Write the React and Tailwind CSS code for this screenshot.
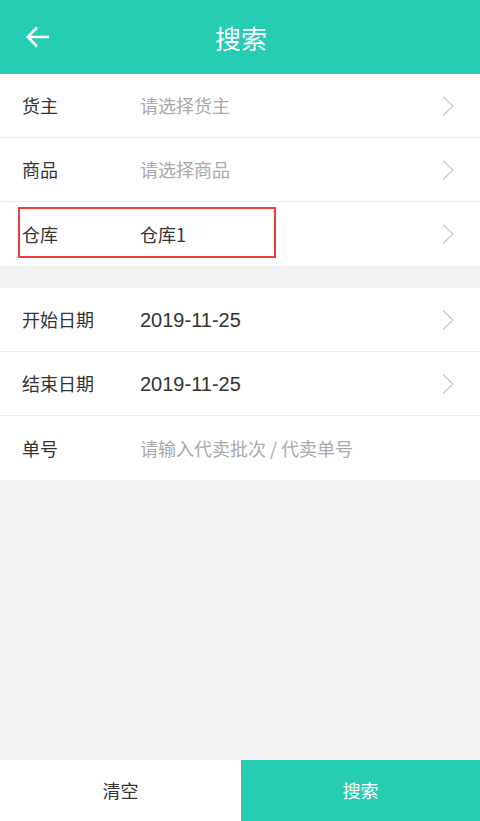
import React from 'react';

const font = { fontFamily: '"Noto Sans CJK SC", "Noto Sans", sans-serif' };

function Chevron() {
    return (
        <svg width="14" height="22" viewBox="0 0 14 22" fill="none" className="shrink-0">
            <path d="M2 1.5 L12 11 L2 20.5" stroke="#c9c9c9" strokeWidth="1.3" />
        </svg>
    );
}

function Row({ label, value, placeholder, arrow = true, last = false, latin = false }) {
    return (
        <div className={`h-16 flex items-center pl-[22px] pr-[25px] ${last ? '' : 'border-b border-[#ececec]'}`}>
            <div className="w-[118px] text-[18px] text-[#333333]">{label}</div>
            <div
                className={`flex-1 ${latin ? 'text-[20px] font-["Liberation_Sans",sans-serif]' : 'text-[18px]'} ${value ? 'text-[#333333]' : 'text-[#a9a9a9]'}`}
            >
                {value || placeholder}
            </div>
            {arrow && <Chevron />}
        </div>
    );
}

export default function App() {
    return (
        <div className="w-[480px] h-[821px] bg-[#f3f3f3] flex flex-col" style={font}>
            <div className="h-[74px] bg-[#26cdb3] flex items-center relative shrink-0">
                <svg className="absolute left-[26px] top-[26px]" width="24" height="22" viewBox="0 0 24 22" fill="none">
                    <path d="M11 1.5 L1.8 11 L11 20.5 M2 11 H23" stroke="white" strokeWidth="2.6" />
                </svg>
                <div className="flex-1 text-center text-white text-[26px] pl-[2px]">搜索</div>
            </div>

            <div className="bg-white">
                <Row label="货主" placeholder="请选择货主" />
                <Row label="商品" placeholder="请选择商品" />
                <div className="relative">
                    <Row label="仓库" value="仓库1" last />
                    <div className="absolute left-[18px] top-[5px] w-[258px] h-[51px] border-2 border-[#f23a3a]" />
                </div>
            </div>

            <div className="h-[22px] shrink-0 border-t border-[#ececec]" />

            <div className="bg-white">
                <Row label="开始日期" value="2019-11-25" latin />
                <Row label="结束日期" value="2019-11-25" latin />
                <Row label="单号" placeholder="请输入代卖批次 / 代卖单号" arrow={false} last />
            </div>

            <div className="flex-1" />

            <div className="h-[61px] flex shrink-0">
                <div className="w-[241px] bg-white flex items-center justify-center text-[18px] text-[#333333]">清空</div>
                <div className="flex-1 bg-[#26cdb3] flex items-center justify-center text-[18px] text-white">搜索</div>
            </div>
        </div>
    );
}
